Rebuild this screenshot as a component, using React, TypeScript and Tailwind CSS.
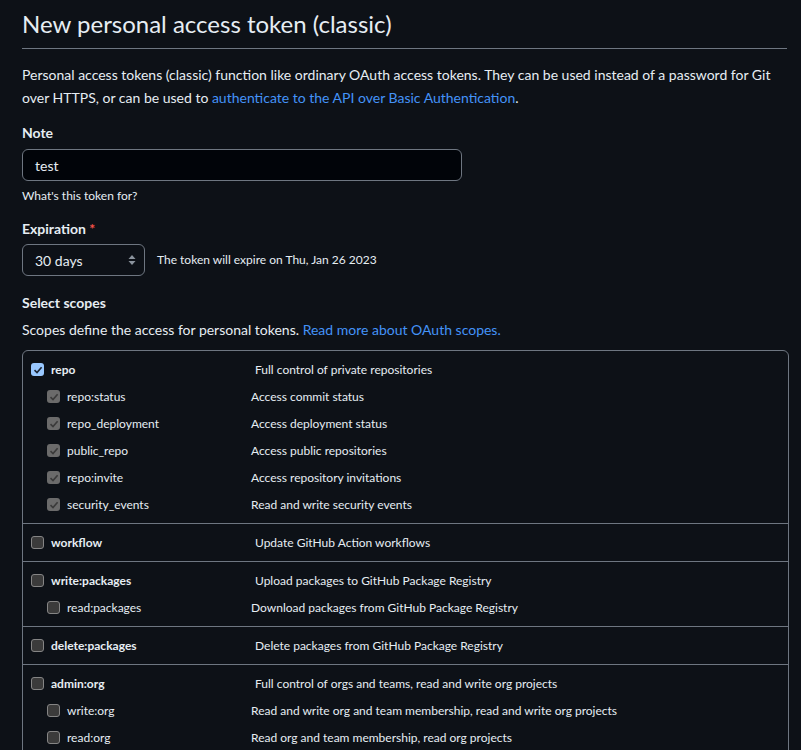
import React from "react";

type Scope = { name: string; desc: string; checked?: "on" | "disabled"; sub?: boolean };

const groups: Scope[][] = [
  [
    { name: "repo", desc: "Full control of private repositories", checked: "on" },
    { name: "repo:status", desc: "Access commit status", checked: "disabled", sub: true },
    { name: "repo_deployment", desc: "Access deployment status", checked: "disabled", sub: true },
    { name: "public_repo", desc: "Access public repositories", checked: "disabled", sub: true },
    { name: "repo:invite", desc: "Access repository invitations", checked: "disabled", sub: true },
    { name: "security_events", desc: "Read and write security events", checked: "disabled", sub: true },
  ],
  [{ name: "workflow", desc: "Update GitHub Action workflows" }],
  [
    { name: "write:packages", desc: "Upload packages to GitHub Package Registry" },
    { name: "read:packages", desc: "Download packages from GitHub Package Registry", sub: true },
  ],
  [{ name: "delete:packages", desc: "Delete packages from GitHub Package Registry" }],
  [
    { name: "admin:org", desc: "Full control of orgs and teams, read and write org projects" },
    { name: "write:org", desc: "Read and write org and team membership, read and write org projects", sub: true },
    { name: "read:org", desc: "Read org and team membership, read org projects", sub: true },
  ],
];

function Checkbox({ state }: { state?: "on" | "disabled" }) {
  if (state === "on") {
    return (
      <span className="w-[13px] h-[13px] rounded-[3px] bg-[#99c8ff] flex items-center justify-center shrink-0">
        <svg width="10" height="10" viewBox="0 0 10 10">
          <path d="M1.5 5.2 L4 7.6 L8.6 2.2" stroke="#1b2533" strokeWidth="1.6" fill="none" />
        </svg>
      </span>
    );
  }
  if (state === "disabled") {
    return (
      <span className="w-[13px] h-[13px] rounded-[3px] bg-[#6b6b6b] flex items-center justify-center shrink-0">
        <svg width="10" height="10" viewBox="0 0 10 10">
          <path d="M1.5 5.2 L4 7.6 L8.6 2.2" stroke="#3a3a3a" strokeWidth="1.6" fill="none" />
        </svg>
      </span>
    );
  }
  return <span className="w-[13px] h-[13px] rounded-[3px] bg-[#3b3b3b] border border-[#858585] shrink-0" />;
}

export default function App() {
  return (
    <div
      className="min-h-[750px] bg-[#0d1117] text-[#e6edf3] px-[22px] pt-[8px] overflow-hidden"
      style={{ fontFamily: "Lato, 'Noto Sans', sans-serif" }}
    >
      <div className="w-[765px]">
        <h1 className="text-[24px] leading-[32px] pb-[8px] border-b border-[#6e7681]">
          New personal access token (classic)
        </h1>
        {/* two fixed lines, same break as the reference */}
        <div className="text-[14px] leading-[23px] mt-[14px]">
          <div>
            Personal access tokens (classic) function like ordinary OAuth access tokens. They can be used instead of a password for Git
          </div>
          <div>
            over HTTPS, or can be used to <span className="text-[#4493f8]">authenticate to the API over Basic Authentication</span>.
          </div>
        </div>

        <div className="mt-[14px] text-[14px] font-bold leading-[20px]">Note</div>
        <div className="mt-[6px] w-[440px] h-[32px] rounded-[6px] border border-[#6e7681] bg-[#010409] flex items-center px-[12px] text-[14px]">
          test
        </div>
        <div className="mt-[6px] text-[12px] leading-[18px]">What's this token for?</div>

        <div className="mt-[14px] text-[14px] font-bold leading-[20px]">
          Expiration <span className="text-[#f85149]">*</span>
        </div>
        <div className="mt-[5px] flex items-center gap-[12px]">
          <div className="w-[123px] h-[32px] rounded-[6px] border border-[#6e7681] bg-[#0d1117] flex items-center justify-between pl-[12px] pr-[8px] text-[14px]">
            <span>30 days</span>
            <svg width="8" height="12" viewBox="0 0 8 12">
              <path d="M4 1 L7.5 5 L0.5 5 Z M4 11 L7.5 7 L0.5 7 Z" fill="#8b949e" />
            </svg>
          </div>
          <span className="text-[12px]">The token will expire on Thu, Jan 26 2023</span>
        </div>

        <div className="mt-[17px] text-[14px] font-bold leading-[20px]">Select scopes</div>
        <p className="mt-[6px] text-[14px] leading-[21px]">
          Scopes define the access for personal tokens.{" "}
          <span className="text-[#4493f8]">Read more about OAuth scopes.</span>
        </p>

        <div className="mt-[10px] w-[767px] rounded-[6px] border border-[#6e7681]">
          {groups.map((g, gi) => (
            <div key={gi} className={`py-[5px] ${gi > 0 ? "border-t border-[#6e7681]" : ""}`}>
              {g.map((s) => (
                <div key={s.name} className="h-[27px] flex items-center text-[12px]">
                  {s.sub ? (
                    <div className="w-[228px] pl-[24px] flex items-center gap-[7px]">
                      <Checkbox state={s.checked} />
                      <span>{s.name}</span>
                    </div>
                  ) : (
                    <div className="w-[232px] pl-[8px] flex items-center gap-[7px] font-bold">
                      <Checkbox state={s.checked} />
                      <span>{s.name}</span>
                    </div>
                  )}
                  <span>{s.desc}</span>
                </div>
              ))}
            </div>
          ))}
        </div>
      </div>
    </div>
  );
}
